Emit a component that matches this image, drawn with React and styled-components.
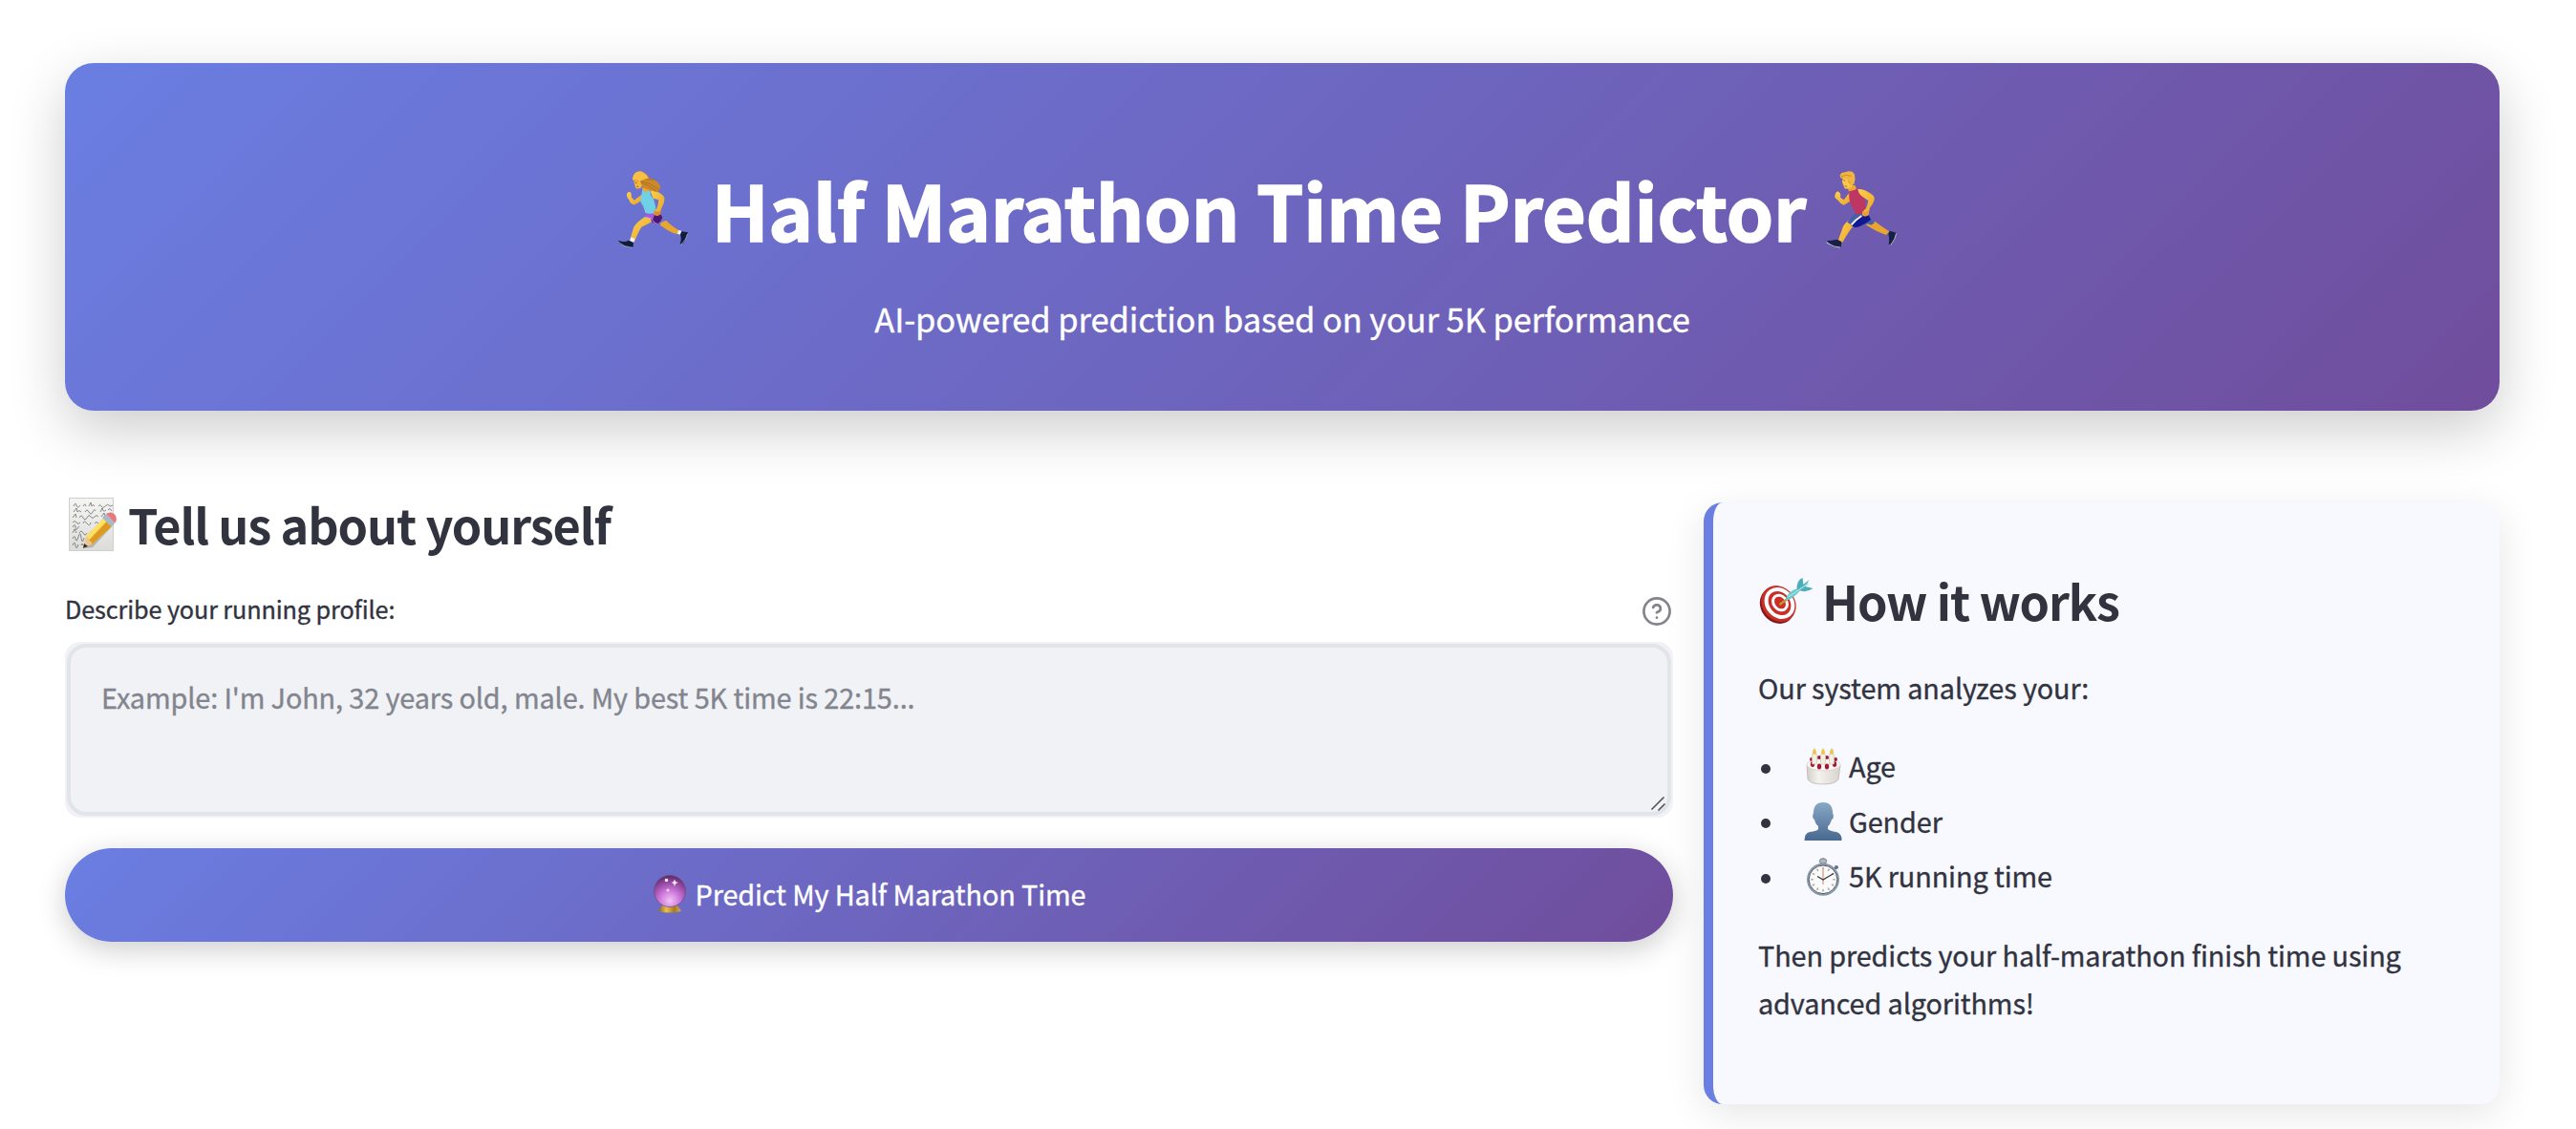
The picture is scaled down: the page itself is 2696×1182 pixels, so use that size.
import React from 'react';
import styled, { createGlobalStyle } from 'styled-components';

const GlobalStyle = createGlobalStyle`
  * { box-sizing: border-box; }
  body {
    margin: 0;
    background: #ffffff;
    color: #31333f;
    font-family: "Noto Sans CJK SC", "Open Sans", sans-serif;
    letter-spacing: -0.1px;
    -webkit-text-stroke: 0.35px currentColor;
    overflow: hidden;
  }
  h1, h2, p, ul { margin: 0; padding: 0; }
`;

const gradient = 'linear-gradient(135deg, #6a7ee2 0%, #704d9c 100%)';

const Page = styled.main`
  height: 1182px;
  padding: 66px 80px 0 68px;
  overflow: hidden;
`;

const Banner = styled.header`
  display: flex;
  flex-direction: column;
  align-items: center;
  height: 364px;
  padding-top: 99px;
  border-radius: 30px;
  background: ${gradient};
  box-shadow: 0 20px 60px rgba(0, 0, 0, 0.2);
  color: #ffffff;
`;

const Title = styled.h1`
  display: flex;
  align-items: center;
  height: 106px;
  margin-right: 55px;
  font-size: 79px;
  font-weight: 700;
  line-height: 106px;
  white-space: nowrap;
  -webkit-text-stroke: 1.6px currentColor;
`;

const TitleText = styled.span`
  padding-top: 1px;
  margin: 0 8px 0 14px;
`;

const Subtitle = styled.p`
  margin-top: 32px;
  font-size: 34.5px;
  line-height: 60px;
`;

const Columns = styled.div`
  display: grid;
  grid-template-columns: 1683px 833px;
  column-gap: 32px;
  align-items: start;
  padding-top: 85px;
`;

const Heading = styled.h2`
  display: flex;
  align-items: center;
  gap: ${(p) => p.$gap}px;
  height: 68px;
  font-size: 50.4px;
  font-weight: 600;
  line-height: 68px;
  letter-spacing: -1.1px;
  white-space: nowrap;
  -webkit-text-stroke: 0;
`;

const LabelRow = styled.div`
  display: flex;
  justify-content: space-between;
  height: 32px;
  margin: 41px 1px 16px 0;
`;

const Label = styled.label`
  font-size: 25.2px;
  line-height: 26px;
`;

const Field = styled.div`
  position: relative;
  height: 184px;
  padding: 2px;
  border-radius: 16px;
  background: #f0f2f6;
`;

const TextArea = styled.textarea`
  display: block;
  width: 100%;
  height: 100%;
  padding: 26px 32px;
  border: 4px solid #e1e5e9;
  border-radius: 20px;
  outline: none;
  resize: none;
  background: #f0f2f6;
  font-family: inherit;
  font-size: 28.8px;
  line-height: 51px;
  letter-spacing: -0.1px;
  color: #31333f;
  &::placeholder { color: #83858e; opacity: 1; }
`;

const Grip = styled.svg`
  position: absolute;
  right: 8px;
  bottom: 6px;
`;

const PredictButton = styled.button`
  display: flex;
  align-items: center;
  justify-content: center;
  gap: 9px;
  width: 100%;
  height: 98px;
  margin-top: 32px;
  padding: 0 0 3px;
  border: 0;
  border-radius: 50px;
  background: ${gradient};
  box-shadow: 0 8px 30px rgba(0, 0, 0, 0.2);
  color: #ffffff;
  font-family: inherit;
  font-size: 28.8px;
  line-height: 52px;
  letter-spacing: -0.1px;
`;

const Card = styled.aside`
  height: 630px;
  margin-top: 11px;
  padding: 69px 40px 0 47px;
  border-left: 10px solid #6b7ee2;
  border-radius: 20px;
  background: #f8f9ff;
  box-shadow: 0 10px 40px rgba(0, 0, 0, 0.1);
`;

const Paragraph = styled.p`
  margin-top: ${(p) => p.$top}px;
  font-size: 28.8px;
  line-height: 50px;
`;

const List = styled.ul`
  margin-top: 28px;
  list-style: none;
`;

const Item = styled.li`
  display: flex;
  align-items: center;
  height: 57.6px;
  font-size: 28.8px;
  line-height: 57.6px;
  &::before {
    content: "";
    width: 10px;
    height: 10px;
    margin: 6px 35px 0 3px;
    border-radius: 50%;
    background: #31333f;
  }
`;

const ItemIcon = styled.span`
  display: flex;
  width: 40px;
  margin: 2px 7px 0 0;
`;

const shoe = '#131c3d';

function WomanRunner() {
  return (
    <svg width="100" height="105" viewBox="0 0 300 315">
      <defs>
        <linearGradient id="skinW" x1="0" y1="0" x2="1" y2="1">
          <stop offset="0" stopColor="#fbcf4b" /><stop offset="1" stopColor="#e9a52c" />
        </linearGradient>
      </defs>
      <path d="M184 200 Q174 208 187 214 Q208 232 234 238 L243 227 Q220 216 198 194 Z" fill="#e8a62f" />
      <path d="M132 183 Q102 202 96 218 Q90 234 85 259 L98 263 Q112 229 121 215 Q142 207 163 192 Z" fill="url(#skinW)" />
      <path d="M88 247 L100 251 L97 262 L84 259 Z M237 225 L247 227 L243 239 L234 236 Z" fill="#f1f4fc" />
      <path d="M49 257 Q68 265 80 257 Q95 262 96 267 L94 279 Q83 281 70 275 L50 266 Z M247 229 L267 232 Q265 248 252 267 Q244 272 242 267 Q248 254 243 239 Z" fill={shoe} />
      <path d="M48 262 L68 275 L93 280 M266 236 Q262 256 245 271" fill="none" stroke="#d5dbe9" strokeWidth="2" />
      <path d="M160 168 L175 168 L187 184 L182 196 L170 207 L153 198 L150 188 Z" fill="#4c1677" />
      <path d="M137 168 L165 169 L157 190 L133 183 Z" fill="#a758df" />
      <path d="M134 184 L154 189 M153 189 Q159 203 172 206" fill="none" stroke="#d3a2ef" strokeWidth="2.5" />
      <path d="M122 113 Q107 124 98 131 L89 120 Q92 107 83 104 Q73 106 75 119 L83 132 Q88 145 99 145 Q113 139 124 129 Z" fill="url(#skinW)" />
      <path d="M123 91 L145 94 L148 108 L126 115 Z" fill="#eba934" />
      <path d="M124 98 Q119 121 118 135 Q129 151 133 170 Q151 177 168 168 Q164 139 158 126 L150 116 L148 98 Q137 112 124 98 Z" fill="#70d0e6" />
      <path d="M149 98 L163 101 Q185 108 193 122 Q195 136 183 158 L179 174 Q171 183 160 175 Q158 165 168 160 Q175 143 175 130 L158 125 Q152 116 149 98 Z" fill="url(#skinW)" />
      <path d="M161 162 Q174 172 181 162 L181 175 Q171 184 161 176 Z" fill="#d88d32" />
      <path d="M99 67 L98 76 L103 93 Q111 97 121 91 L125 71 Z" fill="#f3b83a" />
      <path d="M93 62 Q96 43 116 40 Q136 42 146 62 L164 67 L166 70 Q181 80 180 91 Q178 105 165 104 Q140 99 126 90 Q119 83 119 72 L101 70 Q93 73 93 62 Z" fill="#cd8927" />
      <path d="M93 62 Q97 40 118 40 Q137 46 143 63 Q129 61 118 73 Q107 65 95 68 Z" fill="#f7c044" />
      <path d="M118 70 Q148 76 177 98 M117 74 Q143 84 169 103 M137 65 L165 67" fill="none" stroke="#a96c24" strokeWidth="2.5" />
      <path d="M101 76 L107 77 M106 87 L112 89" stroke="#67431f" strokeWidth="2" />
    </svg>
  );
}

function ManRunner() {
  return (
    <svg width="100" height="105" viewBox="0 0 300 315">
      <defs>
        <linearGradient id="skinM" x1="0" y1="0" x2="1" y2="1">
          <stop offset="0" stopColor="#ffd04c" /><stop offset="1" stopColor="#eba42b" />
        </linearGradient>
      </defs>
      <path d="M164 208 Q198 230 228 240 L238 229 Q210 211 194 198 Z" fill="#e8a62f" />
      <path d="M112 193 Q96 204 91 219 L77 258 L91 263 Q112 227 126 210 Z" fill="url(#skinM)" />
      <path d="M42 258 L57 257 L73 254 Q87 259 88 262 L86 278 Q72 281 55 273 Z M239 227 L260 233 Q260 247 247 268 L236 270 Q239 252 235 237 Z" fill="#182143" />
      <path d="M41 264 L65 276 L84 279 M260 235 Q257 253 243 271" fill="none" stroke="#dce1e7" strokeWidth="2.5" />
      <path d="M128 174 L174 175 Q180 193 192 202 L180 209 L166 201 Q154 212 131 216 L106 200 Z" fill="#4660a9" />
      <path d="M145 182 L174 179 L180 192 Q154 212 132 217 L118 210 Z" fill="#12188d" />
      <path d="M151 180 Q132 192 119 208" fill="none" stroke="#eef2ff" strokeWidth="6" />
      <path d="M112 108 L95 130 L84 122 Q88 108 76 103 Q66 108 67 122 L77 131 Q86 144 95 146 Q108 141 120 130 Z" fill="url(#skinM)" />
      <path d="M106 87 L130 83 L136 98 L112 107 Z" fill="#eca936" />
      <path d="M112 102 Q125 103 139 93 L152 102 Q165 133 164 168 Q150 178 131 175 Q127 160 117 143 Q110 129 112 102 Z" fill="#bd3762" />
      <path d="M139 96 Q158 94 182 112 Q193 119 191 130 Q186 146 177 154 L173 175 Q163 186 153 176 Q154 163 164 158 Q171 143 172 132 L154 120 Q142 113 139 96 Z" fill="url(#skinM)" />
      <path d="M154 165 Q166 170 174 162 L173 176 Q163 186 153 177 Z" fill="#e7a039" />
      <path d="M92 60 L90 74 L98 94 Q111 98 122 86 L124 57 Z" fill="#f9c84b" />
      <path d="M84 59 Q79 45 99 43 Q121 34 129 50 Q133 66 127 80 L116 85 L108 69 L101 62 Q91 64 84 59 Z" fill="#f0b640" />
      <path d="M86 57 Q100 48 119 55 M109 70 L116 79" fill="none" stroke="#c88728" strokeWidth="2.5" />
      <path d="M94 67 L99 70 M98 86 L105 88" stroke="#67431f" strokeWidth="2" />
    </svg>
  );
}

const scribbles = [
  'M9 11 q2 -5 3 -1 t4 0 m3 1 q2 -4 3 0 m3 0 l2 -4 l1 4 q2 -3 3 0 m4 0 q2 -3 3 0 t4 0 t4 -1 t4 0',
  'M9 17 l3 -4 l1 4 q2 -3 4 0 m4 0 q2 -4 4 0 t4 0 t3 -1 m5 1 l2 -4 q1 5 4 2 m2 0 q2 -3 4 1',
  'M8 23 l3 -4 l1 4 m3 0 q2 -4 4 0 t4 0 t4 -1 t4 0 t4 0 m3 0 l3 -4 l1 4',
  'M8 28 q2 -3 4 0 t4 0 m3 1 q1 -4 4 0 t4 -1 m4 1 q2 -3 4 0 m2 0 l2 -3',
  'M8 33 q3 -5 3 0 t3 0 l1 -1',
  'M8 39 l2 -4 l2 4 m3 0 q2 -4 4 0 t4 0 m3 0 q1 -3 3 0',
  'M8 45 q2 -5 3 0 t3 -2 t3 1 t3 0',
  'M8 52 q2 -6 3 0 t3 -1 m3 1 q1 -4 2 0',
];

function MemoIcon() {
  return (
    <svg width="59" height="60" viewBox="0 0 59 60">
      <defs>
        <linearGradient id="paper" x1="0" y1="0" x2="0" y2="1">
          <stop offset="0" stopColor="#f5f5f3" /><stop offset="1" stopColor="#dcdddb" />
        </linearGradient>
      </defs>
      <rect x="4.5" y="2.5" width="46" height="55" fill="url(#paper)" stroke="#ced0cf" />
      {scribbles.map((d) => (
        <path key={d} d={d} fill="none" stroke="#6d6d6b" strokeWidth="0.8" />
      ))}
      <path d="M21 55 L29 54 L54 27 L52 19 Z" fill="#767168" opacity=".4" />
      <path d="M22 43 L40 24 L49 32 L28 51 Z" fill="#f6c431" />
      <path d="M25 47 L44 27 L49 32 L28 51 Z" fill="#dc9a22" />
      <path d="M22 43 L40 24 L43 27 L25 46 Z" fill="#ffe064" />
      <path d="M22 43 L19 54 L28 51 Q29 48 25 47 Q25 43 22 43 Z" fill="#edc58e" />
      <path d="M20 50 L19 55 L24 53 Z" fill="#2e2a28" />
      <path d="M39 23 L43 19 L52 28 L48 32 Z" fill="#aab9c9" />
      <path d="M43 19 Q49 15 53 21 Q55 25 52 28 Z" fill="#e77880" />
    </svg>
  );
}

function TargetIcon() {
  return (
    <svg width="59" height="52" viewBox="0 0 58 52">
      <ellipse cx="19.5" cy="31" rx="17" ry="20" transform="rotate(-38 19.5 31)" fill="#811918" />
      <ellipse cx="21" cy="29" rx="17" ry="20" transform="rotate(-38 21 29)" fill="#c92f28" />
      <ellipse cx="22" cy="28.5" rx="12.8" ry="15.5" transform="rotate(-38 22 28.5)" fill="none" stroke="#fff" strokeWidth="4" />
      <ellipse cx="22.5" cy="28" rx="6.8" ry="8.4" transform="rotate(-38 22.5 28)" fill="none" stroke="#fff" strokeWidth="3" />
      <path d="M22 30 L34 21" stroke="#c69828" strokeWidth="2.2" />
      <path d="M28 25 Q31 15 42 13 L46 12 Q42 18 35 23 Q31 26 28 25 Z" fill="#68c8cf" />
      <path d="M40 14 Q40 4 46 2 L47 9 L53 4 L49 11 L57 13 Q50 18 42 15 Z" fill="#4baeb8" />
      <path d="M31 22 L52 8" stroke="#9ce3e4" strokeWidth="1.5" />
    </svg>
  );
}

function CakeIcon() {
  return (
    <svg width="40" height="40" viewBox="0 0 40 40">
      <defs>
        <linearGradient id="cake" x1="0" y1="0" x2="1" y2="0">
          <stop offset="0" stopColor="#d3cdc6" /><stop offset=".35" stopColor="#f5f3ef" /><stop offset="1" stopColor="#d8d3cc" />
        </linearGradient>
      </defs>
      <path d="M3 18 L4 33 Q7 38 20 38 Q33 38 36 33 L38 18 Z" fill="url(#cake)" stroke="#b7afaa" strokeWidth=".7" />
      <ellipse cx="20.5" cy="17.5" rx="17.5" ry="6.5" fill="#f9f7f3" stroke="#d2cec9" strokeWidth=".7" />
      <g fill="#a61938">
        <circle cx="8" cy="12" r="2" /><circle cx="16" cy="10" r="2" /><circle cx="24" cy="10" r="2" /><circle cx="33" cy="12" r="2" />
        <ellipse cx="9" cy="17" rx="2.2" ry="3" /><ellipse cx="16" cy="19.5" rx="2.2" ry="3" /><ellipse cx="24" cy="19.5" rx="2.2" ry="3" /><ellipse cx="32" cy="17" rx="2.2" ry="3" />
      </g>
      {[11, 20, 29].map((x) => (
        <g key={x}>
          <rect x={x - 2.5} y="6" width="5" height="11" rx="1" fill="#f2efe0" stroke="#c9c2ac" strokeWidth=".6" />
          <path d={`M${x} 0 Q${x + 4} 6 ${x} 7 Q${x - 4} 6 ${x} 0`} fill="#edc747" />
        </g>
      ))}
    </svg>
  );
}

function PersonIcon() {
  return (
    <svg width="40" height="40" viewBox="0 0 40 40">
      <defs>
        <linearGradient id="person" x1="0" y1="0" x2="0" y2="1">
          <stop offset="0" stopColor="#88a8c6" /><stop offset="1" stopColor="#486990" />
        </linearGradient>
      </defs>
      <path d="M20 0 Q29 0 30 9 Q30 12 31 14 Q31 17 29 18 Q27 24 25 25 L25 28 Q27 30 34 31 Q40 33 39.5 40 L.5 40 Q.5 32 6 31 Q14 30 15 28 L15 25 Q12 23 11 18 Q9 17 9 14 Q10 12 10 9 Q11 0 20 0 Z" fill="url(#person)" />
    </svg>
  );
}

function StopwatchIcon() {
  const ticks = Array.from({ length: 12 }, (_, i) => i * 30);
  return (
    <svg width="40" height="40" viewBox="0 0 40 40">
      <rect x="18" y="2" width="4" height="6" fill="#7c8792" />
      <ellipse cx="20" cy="3.5" rx="3.7" ry="2.8" fill="#aeb6be" stroke="#747e88" />
      <path d="M31 13 L34 9" stroke="#6b7685" strokeWidth="2.5" />
      <circle cx="34" cy="10" r="2" fill="#61758e" />
      <circle cx="20" cy="22.8" r="16" fill="#fafafa" stroke="#8698aa" strokeWidth="2" />
      <circle cx="20" cy="22.8" r="14.8" fill="none" stroke="#404750" strokeWidth=".9" />
      {ticks.map((a) => (
        <path key={a} d="M20 10 V12.5" stroke="#a3a3a1" strokeWidth="1.4" transform={`rotate(${a} 20 22.8)`} />
      ))}
      <path d="M20 10 V28" stroke="#e9a48d" strokeWidth="1.5" />
      <path d="M14 19.5 L20 23 L31 16.5" fill="none" stroke="#343638" strokeWidth="1.2" />
    </svg>
  );
}

function CrystalBallIcon() {
  return (
    <svg width="36" height="42" viewBox="0 0 36 42">
      <defs>
        <radialGradient id="ball" cx=".5" cy=".8" r=".85">
          <stop offset="0" stopColor="#f3c4f5" /><stop offset=".4" stopColor="#c873d7" /><stop offset=".75" stopColor="#873f94" /><stop offset="1" stopColor="#4c2355" />
        </radialGradient>
        <linearGradient id="brass" x1="0" y1="0" x2="1" y2="0">
          <stop offset="0" stopColor="#8e6420" /><stop offset=".35" stopColor="#e9c04e" /><stop offset=".7" stopColor="#a87a26" /><stop offset="1" stopColor="#d9b04a" />
        </linearGradient>
      </defs>
      <path d="M10 33 H26 L30 39 Q18 42 6 39 Z" fill="url(#brass)" />
      <circle cx="18" cy="18" r="16.5" fill="url(#ball)" stroke="#6d4b77" strokeWidth=".7" />
      <circle cx="14.5" cy="6.5" r="1.7" fill="#fff" />
      <path d="M23 5.5 L24 8.2 L27 9 L24 10 L23 13 L22 10 L19.5 9 L22 8.2 Z" fill="#fff" />
      <circle cx="16" cy="17" r="1.6" fill="#f3d3f6" />
    </svg>
  );
}

function HelpIcon() {
  return (
    <svg width="32" height="32" viewBox="0 0 24 24" fill="none" stroke="#83848c" strokeWidth="2" strokeLinecap="round" strokeLinejoin="round">
      <circle cx="12" cy="12" r="10.2" />
      <path d="M9.09 9a3 3 0 0 1 5.83 1c0 2-3 3-3 3" />
      <path d="M12 17h.01" />
    </svg>
  );
}

const features = [
  { label: 'Age', Icon: CakeIcon },
  { label: 'Gender', Icon: PersonIcon },
  { label: '5K running time', Icon: StopwatchIcon },
];

export default function App() {
  return (
    <>
      <GlobalStyle />
      <Page>
        <Banner>
          <Title>
            <WomanRunner />
            <TitleText>Half Marathon Time Predictor</TitleText>
            <ManRunner />
          </Title>
          <Subtitle>AI-powered prediction based on your 5K performance</Subtitle>
        </Banner>
        <Columns>
          <section>
            <Heading $gap={7}>
              <MemoIcon />
              <span>Tell us about yourself</span>
            </Heading>
            <LabelRow>
              <Label htmlFor="profile">Describe your running profile:</Label>
              <HelpIcon />
            </LabelRow>
            <Field>
              <TextArea id="profile" placeholder="Example: I'm John, 32 years old, male. My best 5K time is 22:15..." />
              <Grip width="16" height="16" viewBox="0 0 16 16" stroke="#55565a" strokeWidth="1.7" strokeLinecap="round">
                <path d="M2 13 L14 1 M9 14 L15 8" />
              </Grip>
            </Field>
            <PredictButton type="button">
              <CrystalBallIcon />
              <span>Predict My Half Marathon Time</span>
            </PredictButton>
          </section>
          <Card>
            <Heading $gap={8}>
              <TargetIcon />
              <span>How it works</span>
            </Heading>
            <Paragraph $top={32}>Our system analyzes your:</Paragraph>
            <List>
              {features.map(({ label, Icon }) => (
                <Item key={label}>
                  <ItemIcon><Icon /></ItemIcon>
                  {label}
                </Item>
              ))}
            </List>
            <Paragraph $top={29}>Then predicts your half-marathon finish time using advanced algorithms!</Paragraph>
          </Card>
        </Columns>
      </Page>
    </>
  );
}
